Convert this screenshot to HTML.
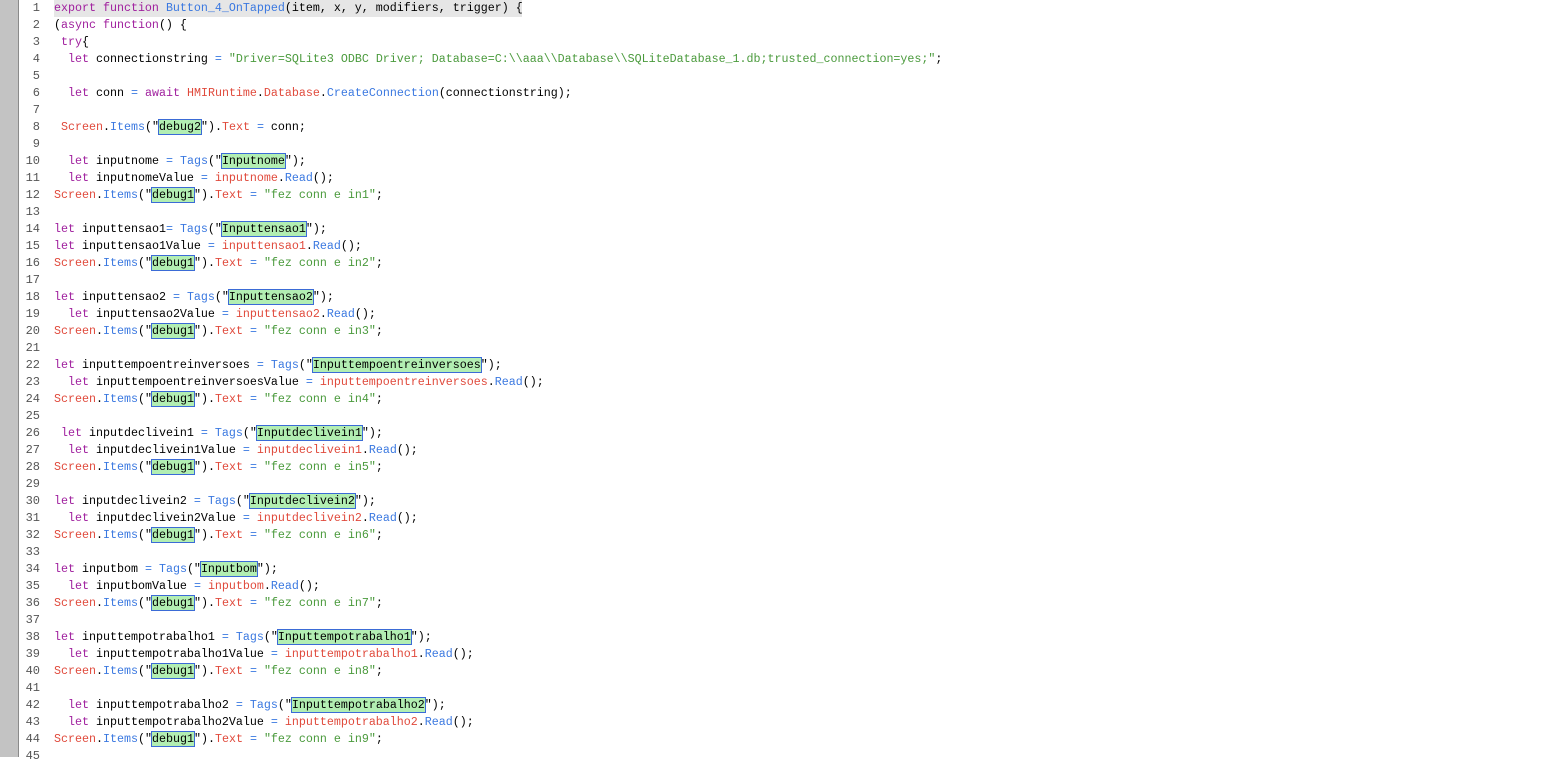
<!DOCTYPE html>
<html><head><meta charset="utf-8"><style>
html,body{margin:0;padding:0;background:#fff;width:1559px;height:757px;overflow:hidden}
.bar{position:absolute;left:0;top:0;width:18px;height:757px;background:#c3c3c3;border-right:1px solid #8a8a8a}
.ln{position:absolute;left:19px;width:21px;text-align:right;font:12px "Liberation Mono",monospace;color:#555;line-height:17px}
pre{position:absolute;left:54px;top:0;margin:0;font:11.67px "Liberation Mono",monospace;line-height:17px;color:#000}
.hl{background:#e6e6e6;display:inline-block;width:468px}
.k{color:#a0209e}.b{color:#3a78e0}.r{color:#e04a3c}.g{color:#4a9a3c}
.m{background:#b2eeb2;outline:1px solid #3b6bd6}
</style></head><body>
<div class="bar"></div>
<div class="ln" style="top:0">1<br>2<br>3<br>4<br>5<br>6<br>7<br>8<br>9<br>10<br>11<br>12<br>13<br>14<br>15<br>16<br>17<br>18<br>19<br>20<br>21<br>22<br>23<br>24<br>25<br>26<br>27<br>28<br>29<br>30<br>31<br>32<br>33<br>34<br>35<br>36<br>37<br>38<br>39<br>40<br>41<br>42<br>43<br>44<br>45</div>
<pre><span class="hl"><span class="k">export function</span> <span class="b">Button_4_OnTapped</span>(item, x, y, modifiers, trigger) {</span>
(<span class="k">async function</span>() {
 <span class="k">try</span>{
  <span class="k">let</span> connectionstring <span class="b">=</span> <span class="g">"Driver=SQLite3 ODBC Driver; Database=C:\\aaa\\Database\\SQLiteDatabase_1.db;trusted_connection=yes;"</span>;

  <span class="k">let</span> conn <span class="b">=</span> <span class="k">await</span> <span class="r">HMIRuntime</span>.<span class="r">Database</span>.<span class="b">CreateConnection</span>(connectionstring);

 <span class="r">Screen</span>.<span class="b">Items</span>("<span class="m">debug2</span>").<span class="r">Text</span> <span class="b">=</span> conn;

  <span class="k">let</span> inputnome <span class="b">=</span> <span class="b">Tags</span>("<span class="m">Inputnome</span>");
  <span class="k">let</span> inputnomeValue <span class="b">=</span> <span class="r">inputnome</span>.<span class="b">Read</span>();
<span class="r">Screen</span>.<span class="b">Items</span>("<span class="m">debug1</span>").<span class="r">Text</span> <span class="b">=</span> <span class="g">"fez conn e in1"</span>;

<span class="k">let</span> inputtensao1<span class="b">=</span> <span class="b">Tags</span>("<span class="m">Inputtensao1</span>");
<span class="k">let</span> inputtensao1Value <span class="b">=</span> <span class="r">inputtensao1</span>.<span class="b">Read</span>();
<span class="r">Screen</span>.<span class="b">Items</span>("<span class="m">debug1</span>").<span class="r">Text</span> <span class="b">=</span> <span class="g">"fez conn e in2"</span>;

<span class="k">let</span> inputtensao2 <span class="b">=</span> <span class="b">Tags</span>("<span class="m">Inputtensao2</span>");
  <span class="k">let</span> inputtensao2Value <span class="b">=</span> <span class="r">inputtensao2</span>.<span class="b">Read</span>();
<span class="r">Screen</span>.<span class="b">Items</span>("<span class="m">debug1</span>").<span class="r">Text</span> <span class="b">=</span> <span class="g">"fez conn e in3"</span>;

<span class="k">let</span> inputtempoentreinversoes <span class="b">=</span> <span class="b">Tags</span>("<span class="m">Inputtempoentreinversoes</span>");
  <span class="k">let</span> inputtempoentreinversoesValue <span class="b">=</span> <span class="r">inputtempoentreinversoes</span>.<span class="b">Read</span>();
<span class="r">Screen</span>.<span class="b">Items</span>("<span class="m">debug1</span>").<span class="r">Text</span> <span class="b">=</span> <span class="g">"fez conn e in4"</span>;

 <span class="k">let</span> inputdeclivein1 <span class="b">=</span> <span class="b">Tags</span>("<span class="m">Inputdeclivein1</span>");
  <span class="k">let</span> inputdeclivein1Value <span class="b">=</span> <span class="r">inputdeclivein1</span>.<span class="b">Read</span>();
<span class="r">Screen</span>.<span class="b">Items</span>("<span class="m">debug1</span>").<span class="r">Text</span> <span class="b">=</span> <span class="g">"fez conn e in5"</span>;

<span class="k">let</span> inputdeclivein2 <span class="b">=</span> <span class="b">Tags</span>("<span class="m">Inputdeclivein2</span>");
  <span class="k">let</span> inputdeclivein2Value <span class="b">=</span> <span class="r">inputdeclivein2</span>.<span class="b">Read</span>();
<span class="r">Screen</span>.<span class="b">Items</span>("<span class="m">debug1</span>").<span class="r">Text</span> <span class="b">=</span> <span class="g">"fez conn e in6"</span>;

<span class="k">let</span> inputbom <span class="b">=</span> <span class="b">Tags</span>("<span class="m">Inputbom</span>");
  <span class="k">let</span> inputbomValue <span class="b">=</span> <span class="r">inputbom</span>.<span class="b">Read</span>();
<span class="r">Screen</span>.<span class="b">Items</span>("<span class="m">debug1</span>").<span class="r">Text</span> <span class="b">=</span> <span class="g">"fez conn e in7"</span>;

<span class="k">let</span> inputtempotrabalho1 <span class="b">=</span> <span class="b">Tags</span>("<span class="m">Inputtempotrabalho1</span>");
  <span class="k">let</span> inputtempotrabalho1Value <span class="b">=</span> <span class="r">inputtempotrabalho1</span>.<span class="b">Read</span>();
<span class="r">Screen</span>.<span class="b">Items</span>("<span class="m">debug1</span>").<span class="r">Text</span> <span class="b">=</span> <span class="g">"fez conn e in8"</span>;

  <span class="k">let</span> inputtempotrabalho2 <span class="b">=</span> <span class="b">Tags</span>("<span class="m">Inputtempotrabalho2</span>");
  <span class="k">let</span> inputtempotrabalho2Value <span class="b">=</span> <span class="r">inputtempotrabalho2</span>.<span class="b">Read</span>();
<span class="r">Screen</span>.<span class="b">Items</span>("<span class="m">debug1</span>").<span class="r">Text</span> <span class="b">=</span> <span class="g">"fez conn e in9"</span>;
</pre>
</body></html>
